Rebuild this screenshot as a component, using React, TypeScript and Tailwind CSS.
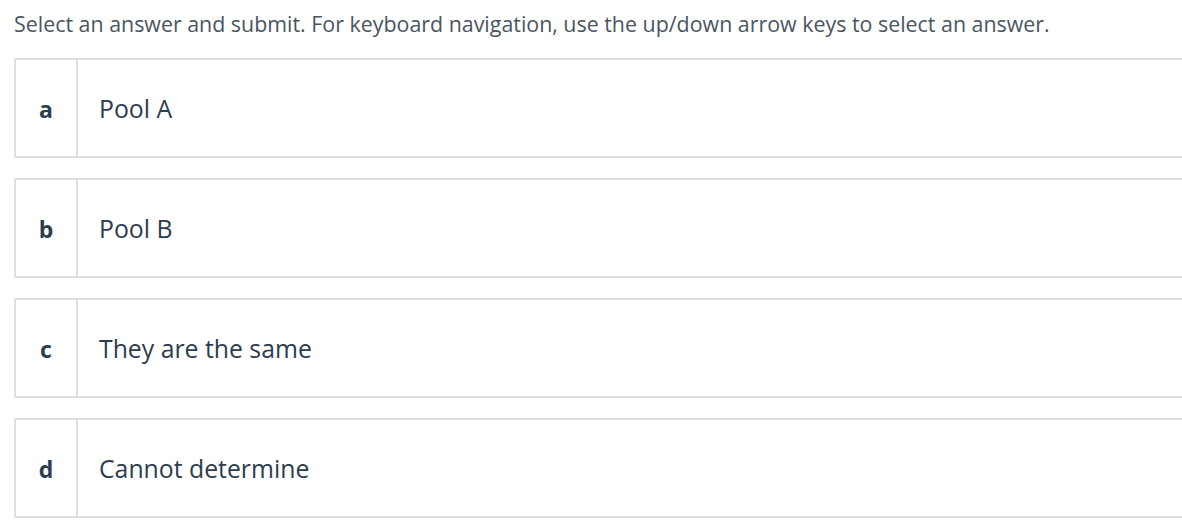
import React from "react";

const options = [
  { key: "a", text: "Pool A" },
  { key: "b", text: "Pool B" },
  { key: "c", text: "They are the same" },
  { key: "d", text: "Cannot determine" },
];

export default function App() {
  return (
    <div
      className="w-[1182px] h-[532px] overflow-hidden bg-white pl-[14px]"
      style={{ fontFamily: "'Open Sans', Lato, sans-serif" }}
    >
      <div className="h-[58px] pt-[9px] text-[21.4px] leading-[30px] text-[#4a5562] whitespace-nowrap">
        Select an answer and submit. For keyboard navigation, use the up/down arrow keys to select an answer.
      </div>
      <div className="flex flex-col gap-[20px]">
        {options.map((o) => (
          <div
            key={o.key}
            className="flex h-[100px] w-[1200px] border-y-2 border-l-2 border-[#dcdfe4]"
          >
            <div className="flex w-[62px] items-center justify-center border-r-2 border-[#dcdfe4] pt-[2px] text-[23px] font-bold text-[#2c3d4f]">
              {o.key}
            </div>
            <div className="flex items-center pl-[21px] pt-[2px] text-[24.8px] text-[#2c3d4f]">
              {o.text}
            </div>
          </div>
        ))}
      </div>
    </div>
  );
}
